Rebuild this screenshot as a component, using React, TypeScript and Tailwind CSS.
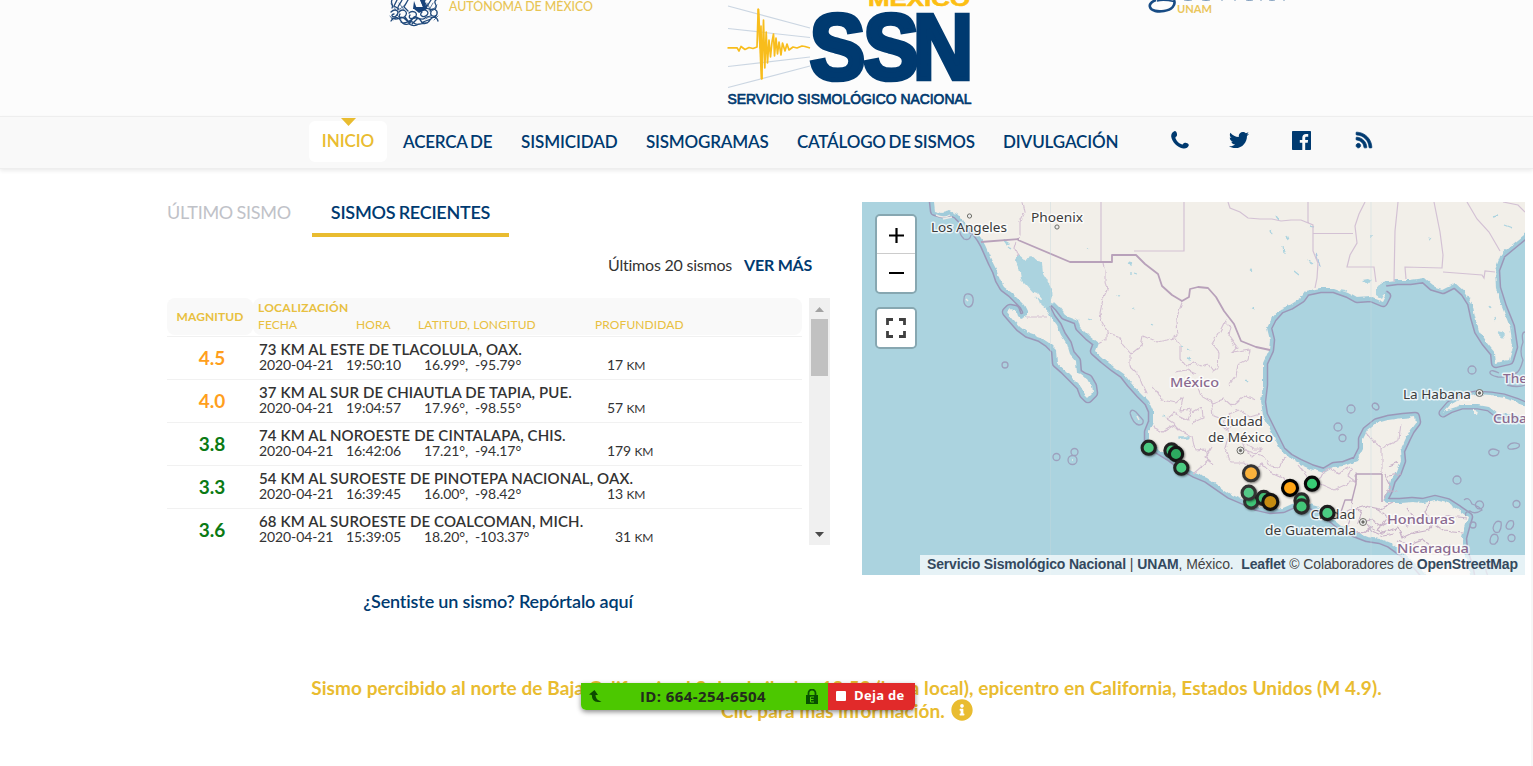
import type { ReactNode } from "react";
import { FaTwitter, FaRss, FaInfoCircle } from "react-icons/fa";

const NAVY = "#003a70";
const GOLD = "#e9bc30";

function UnamLogo() {
  return (
    <svg width="206" height="30" viewBox="389 0 206 30" className="shrink-0">
      <g fill="none" stroke="#214a7c" strokeWidth="1.3" strokeLinecap="round">
        <path d="M392 0c-2 3 2 5 0 8M397 0l-3 6 5 3M402 0c-2 5-5 5-4 10M408 0l-4 7 4 4M425 0c-3 3 5 5 0 9M431 0l-5 8 7 2M436 0c-4 3 3 5-1 9M421 0l3 8" />
        <path d="M391 12c4-4 9-1 6 3s-8 0-3-1M399 12c3-4 9-1 7 3s-9 3-6-1M409 13c3-3 9-1 7 3s-9 3-6-1M421 11c4-3 9 1 6 4s-9 1-5-3M430 11c3-4 8-1 7 3s-8 2-6-2" />
        <path d="M391 21c3-5 8-4 10 0s8 5 10 0 9-3 10 0 6 4 9-1 7-3 8 1M392 18c6 4 9-4 13 1s7 0 9-2 7 5 11 1 7 2 11-2M401 22c4 3 9-3 13 1s9-1 13 0M405 17l5 7M418 18l-6 6M423 22l8-3M409 24c3 2 7 2 10 0" />
        <path d="M391 4l6 7M399 3l6 8M406 4l-6 5M427 3l4 8M433 3l-4 7M437 5l-6 7M397 15l4 4M431 15l-5 4M390 16l3 4M438 16l-4 4" strokeWidth="1" opacity=".7" />
      </g>
      <path d="M418 0h2l3 7h-9v2l5 4 8-4-3-9h2M414 1l-1 8h4z" fill="#17427a" />
      <text x="449" y="11.300" fill="#e8c454" fontFamily="Lato, sans-serif" fontSize="12.5" fontWeight="500" textLength="144" lengthAdjust="spacingAndGlyphs">AUTÓNOMA DE MÉXICO</text>
    </svg>
  );
}

function SsnLogo() {
  return (
    <svg width="246" height="110" viewBox="727 0 246 110" className="shrink-0">
      <text x="868" y="5.5" fill="#fcbf14" stroke="#fcbf14" strokeWidth=".6" fontFamily="Liberation Sans, sans-serif" fontWeight="700" fontSize="21" textLength="102" lengthAdjust="spacingAndGlyphs">MÉXICO</text>
      <g stroke="#cbd6e2" strokeWidth="1.2">
        <path d="M728 6l82 22M728 28.500l82 9M728 66.500l82-9.500M728 87.500l82-21.500" fill="none" />
      </g>
      <path d="M727.500 47.800H737L739 51L741 46.500L745 49.500L749 47.500L753 48.500L757 47L758.200 9L760 48L761 26L761.800 79L763.500 20L764.800 68L766.200 32L767.500 63L769 40L770.500 57L772 42L773.500 34L774.500 56L776 38L777.500 54L779 42L781 55L782.500 43L785 51L787 44L789 50L793 47L797 48L802 46L805 46.500L810 48" fill="none" stroke="#f8bd1c" strokeWidth="1.700" strokeLinejoin="round" />
      <path d="M757.500 9l1.800 0 3.500 70-2.200 0z" fill="#f8bd1c" />
      <g transform="scale(.905 1)">
        <text x="894.700 954 1008.800" y="78.500" fill={NAVY} stroke={NAVY} strokeWidth="4.700" fontFamily="Liberation Sans, sans-serif" fontWeight="700" fontSize="92">SSN</text>
      </g>
      <text x="727.500" y="103.500" fill={NAVY} stroke={NAVY} strokeWidth=".7" fontFamily="Liberation Sans, sans-serif" fontSize="14.500" fontWeight="400" textLength="244" lengthAdjust="spacingAndGlyphs">SERVICIO SISMOLÓGICO NACIONAL</text>
    </svg>
  );
}

function GeofisicaLogo() {
  return (
    <svg width="142" height="16" viewBox="1148 0 142 16" className="shrink-0">
      <path d="M1156 0c-5 2-7 4-6 7 1 4 8 5 14 4 8-1 12-6 10-11" fill="none" stroke="#174b84" strokeWidth="2.600" />
      <path d="M1157 1c6-1.500 12-.5 17 .5" fill="none" stroke="#174b84" strokeWidth="1.600" />
      <path d="M1184 0q4 1 8 0M1202 0q4 1 8 0M1221 0h2M1234 0h2M1246 0q3 1 7 0M1260 0h2M1269 0q3 .8 6 0M1283 0h2" fill="none" stroke="#7897b8" strokeWidth="1" />
      <text x="1177" y="12.500" fill="#eac65c" fontFamily="Lato, sans-serif" fontSize="11" fontWeight="700" textLength="35" lengthAdjust="spacingAndGlyphs">UNAM</text>
    </svg>
  );
}

function PhoneIcon() {
  return (
    <svg width="18" height="18" viewBox="0 0 18 18" fill="currentColor">
      <path d="M3.400.2C4.600-.3 5.600 1 5.900 2.600C6.200 4.200 6 5.100 4.900 5.800C4.300 6.200 4.300 6.800 4.700 7.700C5.800 10 7.700 12 10 13.100C11 13.600 11.500 13.500 12 12.900C12.800 11.900 13.800 11.600 15.300 12C17 12.400 18.200 13.400 17.700 14.600C17 16.700 14.800 17.900 12.300 17.500C6.500 16.600.9 11 .2 5.500C0 3 1.300.9 3.400.2Z" />
    </svg>
  );
}

function FacebookIcon() {
  return (
    <svg width="19" height="19" viewBox="0 0 19 19" fill="currentColor">
      <path d="M.8 0H18.200Q19 0 19 .8V18.200Q19 19 18.200 19H13.200V11.700H15.700L16.100 8.900H13.200V7.100C13.200 6.200 13.500 5.700 14.700 5.700H16.200V3.100Q15.500 3 14 3C11.700 3 10.300 4.400 10.300 6.800V8.900H7.800V11.700H10.300V19H.8Q0 19 0 18.200V.8Q0 0 .8 0Z" />
    </svg>
  );
}

const COAST =
  "M932 190L934 202L935 211L942 213L950 211L957 214L963 220L967 226L976 231L981 238L985 245L989 254L993 263L997 271L1000 280L1004 287L1012 293L1018 299L1024 305L1027 311L1027 316L1020 319L1017 316L1015 310L1010 309L1007 312L1013 319L1020 327L1028 333L1040 337L1049 343L1056 350L1057 363L1065 370L1073 378L1081 386L1084 394L1088 398L1093 393L1092 386L1088 379L1083 377L1077 373L1076 361L1070 354L1067 344L1061 335L1057 326L1051 318L1046 308L1039 303L1034 293L1026 284L1021 279L1019 267L1016 260L1019 255L1024 259L1032 257L1038 262L1042 263L1043 274L1048 282L1052 290L1053 301L1059 307L1065 315L1078 320L1080 327L1089 336L1098 343L1095 351L1104 359L1114 367L1124 374L1131 383L1140 393L1149 402L1153 411L1153 422L1149 432L1149 441L1158 449L1171 457L1184 467L1195 473L1207 478L1217 485L1230 494L1244 500L1257 506L1270 509L1283 508L1292 504L1300 502L1309 504L1319 507L1331 517L1342 526L1354 532L1367 537L1380 539L1390 543L1397 548L1404 553L1418 566L1430 580L1471 580L1468 565L1463 551L1462 538L1465 527L1468 517L1458 510L1447 503L1435 500L1423 503L1412 502L1400 503L1388 503L1383 500L1388 490L1391 480L1397 472L1401 461L1400 451L1406 438L1410 430L1416 422L1415 417L1403 418L1388 420L1377 423L1367 431L1363 439L1363 449L1357 461L1344 466L1334 467L1324 473L1311 469L1300 464L1289 458L1281 451L1275 439L1269 427L1263 415L1261 402L1263 385L1263 363L1269 350L1270 340L1267 328L1272 318L1280 309L1290 305L1301 298L1306 291L1320 288L1334 288L1348 293L1357 298L1371 297L1383 302L1386 296L1377 290L1382 282L1397 280L1410 280L1424 278L1433 286L1443 289L1455 283L1465 292L1472 303L1475 317L1479 331L1486 342L1495 353L1496 363L1509 360L1513 347L1510 327L1502 307L1496 288L1495 270L1501 254L1513 244L1535 226L1535 190Z";

const CUBA =
  "M1443 413L1450 405L1462 398L1476 395L1491 396L1504 398L1516 402L1535 410L1535 423L1520 416L1511 413L1498 414L1489 407L1478 405L1462 405L1450 409Z";

const STATE_LINES =
  "M1101 190V262M1184 190V251H1134M1228 202L1230 208L1240 212L1248 218L1260 219L1272 219L1281 221L1291 220L1301 220L1313 225V251L1318 263L1317 278L1315 288M1308 202V223M1313 233.500H1353M1365 202L1359 214L1355 226L1357 243L1350 255L1347 267H1374L1376 282M1398 202L1395 231L1394 282M1434 202L1440 232L1443 255L1442 268L1405 267L1406 279M1443 272L1482 275L1484 278L1485 271L1495 272M1467 202L1477 219L1489 232L1500 251M1503 202L1518 205L1525 212";
const MEX_LINES =
  "M1023 202L1025 212L1020 222L1020 235L1018 240M1017 242L1015 249L1018 257M1027 317H1048M1103 263L1105 271L1105 281L1107 290L1103 299L1100 313L1102 322L1107 331L1107 339L1098 344M1107 333L1118 336L1124 346L1131 354L1141 346L1143 336L1157 342L1167 340L1177 337L1176 320L1180 308L1183 300M1130 355L1130 366L1138 374L1142 384L1147 394M1174 336L1180 345L1180 358L1186 366L1193 362L1200 366L1208 364L1213 371L1218 368L1219 353L1212 344L1220 331L1225 321L1231 327L1229 336L1237 347L1232 353L1250 350L1248 359L1238 364L1236 376L1229 385M1174 372L1187 370L1196 374M1152 386L1158 393L1162 400L1176 403L1183 397L1180 411L1192 409L1188 420L1174 413L1167 419L1176 425M1151 426L1163 432L1174 425L1179 430L1192 437L1195 450L1205 449L1208 461L1193 474M1193 412L1202 407L1203 418L1192 423M1197 385L1201 396L1213 403L1224 399L1232 406L1244 396L1255 400M1211 402L1213 416L1224 420L1229 434L1225 448L1231 463L1244 463L1251 470L1262 464L1269 471L1284 478L1290 493M1227 438L1241 438L1245 450L1263 456L1270 466L1279 467L1285 457M1246 444L1254 449L1262 449L1253 457L1247 451M1298 465L1305 474L1314 484L1325 473M1322 473L1331 468L1339 474L1344 470L1350 467M1320 484L1334 490L1351 482L1356 482M1352 467L1348 476L1356 482V473M1366 433L1373 441L1382 448L1399 440L1401 423M1382 448V473M1211 447L1205 457L1213 465M1219 423L1226 430L1233 425L1229 414L1239 410L1250 417L1260 414";
const CA_LINES =
  "M1344 513L1353 508L1362 512L1358 523L1370 519L1381 526L1392 521L1383 513L1376 509M1340 516L1350 520L1347 528L1360 534L1371 527L1383 533L1398 527L1402 538L1414 532L1429 529L1437 520L1450 516L1466 518M1353 499L1352 510L1366 506L1380 509L1393 503M1365 521L1372 531L1383 536L1394 534M1407 507L1414 518L1408 527L1398 519L1386 520L1377 530M1430 501L1425 512L1432 523L1443 531L1463 533M1398 540L1409 545L1423 540L1437 550L1449 545L1465 551M1384 473L1391 487L1383 500M1385 490L1398 492M1387 476L1401 474M1389 466L1398 462";
const ISLANDS =
  "M1374 403q-3 2-1 5l3 2q3 0 3-3-1-4-5-4M1347 409a4 4 0 108 0 4 4 0 00-8 0M1334 427a4 4 0 108 0 4 4 0 00-8 0M1339 438a3.500 3.500 0 107 0 3.500 3.500 0 00-7 0M1499 373q-8-4-9-1t8 5q14 1 19-5M1468 370a4 4 0 108 0 4 4 0 00-8 0M1489 451q3-4 10 0 0 5-6 5-5-1-4-5M1508 446q4-5 11-2 2 4-6 5-6 1-5-3M1453 480a4 4 0 108 0 4 4 0 00-8 0M1476 503a4 4 0 107 0 4 4 0 00-7 0M1513 504a3.500 3.500 0 107 0 3.500 3.500 0 00-7 0M1464 500q5-4 8 4 8 3 10 6-7 5-12 1-6 1-4 5M1493 528q2-9 8-6 1 6-2 10-5 2-6-4M1506 526q2-7 7-5 2 5-2 8-5 1-5-3M1490 541q1-9 7-6 3 5-2 9-5 1-5-3M1508 538a3.500 3.500 0 107 0 3.500 3.500 0 00-7 0M1470 525a3 3 0 106 0 3 3 0 00-6 0M1053 457a3 3 0 107 0 3 3 0 00-7 0M1071 452a3.500 3.500 0 107 0 3.500 3.500 0 00-7 0M1068 460a4 4 0 109 0 4 4 0 00-9 0M1002 365a3 3 0 106 0 3 3 0 00-6 0M964 299q0-6 5-5 5 1 4 8-1 5-5 5-5-2-4-8M1130 413q1-5 6-1l7 8q1 5-4 5-6-1-9-12M960 226q-2 7 4 13 6 2 7-4M1525 332q-4 0-2 10-4 10 0 18-3 12-8 14M1488 576q-6-12 4-11l10 4M1507 385q11 3 18 0";

type Mark = { x: number; y: number; big?: boolean; fill: string; ring: string };
const marks: Mark[] = [
  { x: 1148.700, y: 447.700, fill: "#4bcb82", ring: "#222" },
  { x: 1171.500, y: 450.500, fill: "#42c278", ring: "#222" },
  { x: 1176, y: 454, fill: "#2daa60", ring: "#151515" },
  { x: 1181.300, y: 467.700, fill: "#4bcb82", ring: "#222" },
  { x: 1251, y: 473.300, big: true, fill: "#fbb23c", ring: "#333" },
  { x: 1251.200, y: 501.500, fill: "#3fc577", ring: "#333" },
  { x: 1248.700, y: 492.700, fill: "#54c987", ring: "#333" },
  { x: 1263.700, y: 498, fill: "#43bd73", ring: "#252525" },
  { x: 1270.300, y: 501.900, big: true, fill: "#c48b12", ring: "#111" },
  { x: 1290, y: 487.900, big: true, fill: "#ffa516", ring: "#000" },
  { x: 1312, y: 483.700, fill: "#38cc75", ring: "#0a0a0a" },
  { x: 1301.500, y: 500.500, fill: "#44c97a", ring: "#2a2a2a" },
  { x: 1301.500, y: 506.500, fill: "#43c578", ring: "#2a2a2a" },
  { x: 1327.400, y: 513, fill: "#4bcb82", ring: "#1d1d1d" },
];

type Label = { x: number; y: number; w: number; t: string; country?: boolean };
const labels: Label[] = [
  { x: 931, y: 232, w: 76, t: "Los Angeles" },
  { x: 1031, y: 221.500, w: 52, t: "Phoenix" },
  { x: 1170, y: 387, w: 49, t: "México", country: true },
  { x: 1218, y: 426, w: 45, t: "Ciudad" },
  { x: 1208, y: 442, w: 65, t: "de México" },
  { x: 1403, y: 399, w: 68, t: "La Habana" },
  { x: 1493, y: 423, w: 34, t: "Cuba", country: true },
  { x: 1503, y: 382.500, w: 24, t: "The", country: true },
  { x: 1310.500, y: 518.500, w: 45, t: "Ciudad" },
  { x: 1265, y: 535, w: 91, t: "de Guatemala" },
  { x: 1387, y: 523.500, w: 68, t: "Honduras", country: true },
  { x: 1397, y: 552.500, w: 72, t: "Nicaragua", country: true },
];

function SeismicMap() {
  return (
    <svg width="663" height="373" viewBox="862 202 663 373" className="block">
      <defs>
        <filter id="jag" x="862" y="202" width="663" height="373" filterUnits="userSpaceOnUse">
          <feTurbulence type="fractalNoise" baseFrequency="0.14" numOctaves="3" seed="4" result="n" />
          <feDisplacementMap in="SourceGraphic" in2="n" scale="4.500" xChannelSelector="R" yChannelSelector="G" />
        </filter>
        <filter id="soft" x="-40%" y="-40%" width="180%" height="180%">
          <feGaussianBlur stdDeviation="0.8" />
        </filter>
      </defs>
      <rect x="862" y="202" width="663" height="373" fill="#abd3df" />
      <g strokeLinejoin="round">
        <path d={COAST} fill="none" stroke="#9b97b8" strokeWidth="10.500" />
        <path d={CUBA} fill="none" stroke="#9b97b8" strokeWidth="9" />
        <path d={COAST} fill="#a1cbda" stroke="#a1cbda" strokeWidth="7.500" />
        <path d={CUBA} fill="#a1cbda" stroke="#a1cbda" strokeWidth="6.500" />
        <path d="M1018 257L1024 259L1038 259L1043 268L1045 279L1052 290L1053 302L1046 306L1034 293L1021 279Z" fill="#abd3df" stroke="#abd3df" strokeWidth="4" />
      </g>
      <g filter="url(#jag)">
        <path d={COAST} fill="#f2efe9" />
        <path d={CUBA} fill="#f2efe9" />
        <path d="M1018 258L1024 260L1032 258L1038 263L1042 265L1042 275L1047 283L1051 290L1050 299L1046 302L1040 298L1035 291L1027 283L1022 278L1020 267Z" fill="#abd3df" />
        <path d="M1034 292l3 1 5 6-1 2-7-6zM1051 297l3 1v5l-3 2zM1473 410l5 1-1 4-4-1z" fill="#f2efe9" />
        <path d={MEX_LINES} fill="none" stroke="#d3bfd2" strokeWidth="1.100" />
        <path d={CA_LINES} fill="none" stroke="#c9b3c9" strokeWidth="1.200" />
        <path d="M1003 240l5 3-2 1M1007 246l4 3M1087 248l3 1M1128 263l4 1M1131 271v4M1134 273l3 1M1117 295l3 1M1132 308l3 1M1088 319l3 1M1181 345l2 1M1188 348l3 2M1187 358l4 1M1150 324l3 1M1180 437h9v1h-9zM1276 216l3 4M1271 230l2 4M1287 236l2 5M1310 226l4 1M1283 246l1 7M1307 260l6 4M1294 270l5 4M1371 235v4M1428 238l2 1M1504 225l8 3M1497 215l-4 1M1250 270l2 1M1251 308l3 1M1246 380l2 2M1163 415l3 3M1498 332l4 1M1500 337v-4M1489 305l2 3M1494 317l1 3M1363 281l8 1M1341 290l6 1" fill="#abd3df" stroke="#abd3df" strokeWidth="1.300" />
        <path d="M1499 334l4-3 2 3-3 4zM1362 280l6-1 4 2-5 3zM1376 287l9-5 2 7-5 10-6-4z" fill="#abd3df" />
        <path d="M1316 253l4 14" fill="none" stroke="#abc8e0" strokeWidth="1.500" />
      </g>
      <path d={STATE_LINES} fill="none" stroke="#d3c1d4" strokeWidth="1.200" />
      <g fill="none" stroke="#b8a1ba" strokeLinejoin="round">
        <path d="M981 242L1019 239M1018 240L1070 262H1112V255H1136L1145 264L1158 274L1162 286L1172 295L1182 301L1189 297L1190 289L1198 287L1208 288L1216 297L1224 311L1234 324L1241 341L1256 347L1270 350" strokeWidth="1.800" />
        <path d="M1356 474H1382M1382 474V502M1356 474V484L1352 500H1345L1340 515" strokeWidth="1.400" />
      </g>
      <path d="M1050.500 202V575M1371 202V575" stroke="#c4d9de" strokeWidth=".6" opacity=".7" />
      <path d={ISLANDS} fill="none" stroke="#9da0bd" strokeWidth="1.300" />
      <path d="M966 299l2 2M1137 416l2 4M1072 460h1M936 215q8 4 14 0M943 219l9-2" fill="none" stroke="#eceae7" strokeWidth="1.500" />

      <g fontFamily="Noto Sans, sans-serif" fontSize="13" strokeLinejoin="round">
        {labels.map((l, i) => (
          <text key={i} x={l.x} y={l.y} fontWeight={l.country ? 500 : 400} fill={l.country ? "#8a6a90" : "#3c3c3c"} stroke="#ffffff" strokeOpacity=".75" strokeWidth="3" paintOrder="stroke" textLength={l.w} lengthAdjust="spacingAndGlyphs">
            {l.t}
          </text>
        ))}
      </g>
      <g fill="#eee" stroke="#6d6d66" strokeWidth="1">
        <circle cx="969.500" cy="216" r="2.100" />
        <circle cx="1057" cy="227" r="2.100" />
        {[[1240.500, 450.500], [1479.500, 393], [1363, 522]].map(([x, y]) => (
          <g key={x}>
            <circle cx={x} cy={y} r="3.500" />
            <circle cx={x} cy={y} r="1.200" fill="#666" />
          </g>
        ))}
      </g>

      {marks.map((m, i) => (
        <g key={i}>
          <circle cx={m.x + 1} cy={m.y + 1} r={m.big ? 9 : 8} fill="#000" opacity=".5" filter="url(#soft)" />
          <circle cx={m.x} cy={m.y} r={m.big ? 7.500 : 6.600} fill={m.fill} stroke={m.ring} strokeWidth="3.100" />
        </g>
      ))}
    </svg>
  );
}

function MapButton({ children }: { children: ReactNode }) {
  return <div className="flex h-[38px] w-[38px] items-center justify-center bg-white">{children}</div>;
}

const quakes = [
  { m: "4.5", hot: true, name: "73 KM AL ESTE DE TLACOLULA, OAX.", time: "19:50:10", lat: "16.99°,", lon: "-95.79°", d: "17", pad: "" },
  { m: "4.0", hot: true, name: "37 KM AL SUR DE CHIAUTLA DE TAPIA, PUE.", time: "19:04:57", lat: "17.96°,", lon: "-98.55°", d: "57", pad: "" },
  { m: "3.8", hot: false, name: "74 KM AL NOROESTE DE CINTALAPA, CHIS.", time: "16:42:06", lat: "17.21°,", lon: "-94.17°", d: "179", pad: "" },
  { m: "3.3", hot: false, name: "54 KM AL SUROESTE DE PINOTEPA NACIONAL, OAX.", time: "16:39:45", lat: "16.00°,", lon: "-98.42°", d: "13", pad: "" },
  { m: "3.6", hot: false, name: "68 KM AL SUROESTE DE COALCOMAN, MICH.", time: "15:39:05", lat: "18.20°,", lon: "-103.37°", d: "31", pad: "pl-2" },
];

function QuakeTable() {
  return (
    <div className="flex h-[247px] w-[663px] justify-between overflow-hidden">
      <div className="w-[635px]">
        <div className="flex h-[38px] text-[12px] text-[#e8c040]">
          <div className="flex h-[37px] w-[86px] items-center justify-center rounded-lg bg-[#f9f9f9] font-bold tracking-[0.1px]">MAGNITUD</div>
          <div className="h-[37px] flex-1 rounded-lg bg-[#f9f9f9] pl-[5px] pt-[1px] leading-[17px]">
            <div className="font-bold tracking-[0.25px]">LOCALIZACIÓN</div>
            <div className="flex tracking-[0.1px]">
              <span className="w-[98px]">FECHA</span>
              <span className="w-[62px]">HORA</span>
              <span className="w-[177px]">LATITUD, LONGITUD</span>
              <span>PROFUNDIDAD</span>
            </div>
          </div>
        </div>
        {quakes.map((q) => (
          <div key={q.name} className="flex h-[43px] border-t border-[#f1f1f1] text-[#333]">
            <div className={q.hot ? "w-[92px] pr-[2px] pt-[9px] text-center text-[19px] font-bold leading-6 text-[#ff9f1c]" : "w-[92px] pr-[2px] pt-[9px] text-center text-[19px] font-bold leading-6 text-[#0b7a14]"}>{q.m}</div>
            <div className="flex-1 whitespace-nowrap pt-[4px]">
              <div className="text-[15px] font-semibold leading-4 tracking-[0.12px]">{q.name}</div>
              <div className="flex text-[14px] leading-4 tracking-[-0.1px]">
                <span className="w-[87px]">2020-04-21</span>
                <span className="w-[78px]">{q.time}</span>
                <span className="w-[51px]">{q.lat}</span>
                <span className="w-[132px]">{q.lon}</span>
                <span className={q.pad}>{q.d} <span className="text-[12px] tracking-[-0.3px]">KM</span></span>
              </div>
            </div>
          </div>
        ))}
      </div>
      <div className="flex w-[21px] flex-col items-center bg-[#f0f0f0]">
        <svg width="21" height="21" viewBox="0 0 21 21"><path d="M6 14l4.500-5 4.500 5z" fill="#a3a3a3" /></svg>
        <div className="h-[57px] w-[17px] bg-[#c1c1c1]" />
        <div className="flex-1" />
        <svg width="21" height="21" viewBox="0 0 21 21"><path d="M6 8l4.500 5L15 8z" fill="#4a4a4a" /></svg>
      </div>
    </div>
  );
}

export default function App() {
  return (
    <div className="relative h-[766px] w-[1533px] overflow-hidden bg-white font-['Lato',sans-serif] text-[#333]">
      <header className="flex h-[116px] items-start bg-[#fcfcfc] pl-[389px]">
        <UnamLogo />
        <div className="ml-[132px] shrink-0"><SsnLogo /></div>
        <div className="ml-[175px] shrink-0"><GeofisicaLogo /></div>
      </header>
      <nav className="flex h-[53px] items-center whitespace-nowrap border-y border-[#eeeeee] bg-[#f9f9f9] pb-[2px] pl-[309px] text-[17px] font-semibold tracking-[-0.2px] text-[#003a70] shadow-[0_2px_4px_rgba(0,0,0,0.08)] [word-spacing:-1.2px]">
        <a className="relative flex h-[41px] w-[78px] items-center justify-center rounded-md bg-white pb-[1px] tracking-[-0.05px] text-[#e9bc30]">
          INICIO
          <svg className="absolute left-[32px] top-[-3px]" width="15" height="8" viewBox="0 0 15 8"><path d="M0 0h15L7.500 8z" fill={GOLD} /></svg>
        </a>
        <a className="ml-4 w-[118px]">ACERCA DE</a>
        <a className="w-[125px] tracking-[-0.1px]">SISMICIDAD</a>
        <a className="w-[151px]">SISMOGRAMAS</a>
        <a className="w-[206px]">CATÁLOGO DE SISMOS</a>
        <a className="w-[168px] tracking-[-0.12px]">DIVULGACIÓN</a>
        <a className="w-[58px] pb-[3px]"><PhoneIcon /></a>
        <a className="w-[63px] pb-[3px]"><FaTwitter size={20} /></a>
        <a className="w-[63px] pb-[3px]"><FacebookIcon /></a>
        <a className="pb-[4px]"><FaRss size={18} strokeWidth={22} /></a>
      </nav>

      <main className="flex h-[421px] pl-[167px] pt-[33px]">
        <section className="w-[663px]">
          <div className="flex h-[35px] whitespace-nowrap text-[18px] leading-5 tracking-[-0.26px] [word-spacing:-0.8px]">
            <div className="w-[145px] text-[#c0c2c8]">ÚLTIMO SISMO</div>
            <div className="h-[35px] w-[197px] border-b-4 border-[#e9bc30] text-center font-semibold text-[#003a70]">SISMOS RECIENTES</div>
          </div>
          <div className="flex h-[61px] justify-end gap-3 pr-[18px] pt-[18px] text-[16px] leading-5 tracking-[-0.22px]">
            <span>Últimos 20 sismos</span>
            <span className="font-bold text-[#003a70]">VER MÁS</span>
          </div>
          <QuakeTable />
          <div className="mt-[45px] pr-[1px] text-center text-[18px] font-semibold leading-[22px] tracking-[-0.16px] text-[#003a70]">¿Sentiste un sismo? Repórtalo aquí</div>
        </section>

        <section className="relative ml-8 h-[373px] w-[663px] overflow-hidden">
          <SeismicMap />
          <div className="absolute left-[13px] top-[12px] flex flex-col gap-[13px]">
            <div className="flex w-[42px] flex-col divide-y divide-[#ccc] overflow-hidden rounded-[5px] border-2 border-[#87a7b1]">
              <MapButton><svg className="mt-[2px]" width="17" height="17" viewBox="0 0 17 17"><path d="M8.500 1v15M1 8.500h15" stroke="#000" strokeWidth="2.200" /></svg></MapButton>
              <MapButton><svg width="17" height="17" viewBox="0 0 17 17"><path d="M1 8h15" stroke="#000" strokeWidth="2.200" /></svg></MapButton>
            </div>
            <div className="w-[42px] overflow-hidden rounded-[5px] border-2 border-[#87a7b1]">
              <MapButton><svg width="22" height="22" viewBox="0 0 22 22"><path d="M2.500 8V2.500H8M14 2.500h5.500V8M19.500 14v5.500H14M8 19.500H2.500V14" fill="none" stroke="#404040" strokeWidth="2.800" /></svg></MapButton>
            </div>
          </div>
          <div className="absolute bottom-0 right-0 h-5 w-[605px] whitespace-nowrap bg-white/70 pl-[7px] font-['Liberation_Sans',sans-serif] text-[14px] leading-[19px] text-[#444]">
            <b className="tracking-[-0.17px] text-[#34495e]">Servicio Sismológico Nacional</b> | <b className="tracking-[-0.2px] text-[#34495e]">UNAM</b><span className="tracking-[-0.1px]">, México.&nbsp; </span><b className="tracking-[-0.15px] text-[#34495e]">Leaflet</b> <span className="tracking-[-0.1px]">© Colaboradores de</span> <b className="tracking-[-0.19px] text-[#34495e]">OpenStreetMap</b>
          </div>
        </section>
      </main>

      <section className="pl-[160px] pt-[86px] text-center text-[19px] font-bold leading-[23px] tracking-[0.085px] text-[#e9bc30]">
        <div>Sismo percibido al norte de Baja California el 3 de abril a las 18:53 (hora local), epicentro en California, Estados Unidos (M 4.9).</div>
        <div className="flex items-center justify-center gap-[6px] pl-[1px]">
          <span>Clic para más información.</span>
          <FaInfoCircle size={22} className="relative top-[-1px]" />
        </div>
      </section>

      <div className="absolute left-[581px] top-[683px] flex h-[27px] w-[334px] overflow-hidden rounded-b-[5px] font-['Open_Sans',sans-serif] font-bold shadow-[0_2px_5px_rgba(0,0,0,0.45)]">
        <div className="flex w-[247px] items-center bg-[#4cc800] pl-[8px] text-[15px] text-[#222b1c]">
          <svg width="13" height="14" viewBox="0 0 13 14"><path d="M0 4.500L5.500 0L9 5H6.500Q6.500 10 12.500 11.500Q3 14 2.800 5Z" fill="#0c4a00" /></svg>
          <span className="ml-[38px] w-[166px] whitespace-nowrap tracking-[0.4px]">ID: 664-254-6504</span>
          <svg width="12" height="15" viewBox="0 0 12 15"><path d="M2.500 7V4a3.500 3.500 0 017 0V7" fill="none" stroke="#0a5200" strokeWidth="1.800" /><rect y="6" width="12" height="9" fill="#075000" /><path d="M8 8H4.500V13H8M4.500 10.500H7.500" fill="none" stroke="#4cc800" strokeWidth="1" /></svg>
        </div>
        <div className="flex w-[87px] items-center bg-[#e12a2a] pb-[2px] pl-[8px] text-[13px] text-white">
          <span className="h-[10px] w-[10px] rounded-[1px] bg-white" />
          <span className="ml-[8px] whitespace-nowrap tracking-[0.3px]">Deja de</span>
        </div>
      </div>
      <div className="absolute right-0 top-[350px] h-[416px] w-[2px] bg-[#f7f7f7]" />
    </div>
  );
}
